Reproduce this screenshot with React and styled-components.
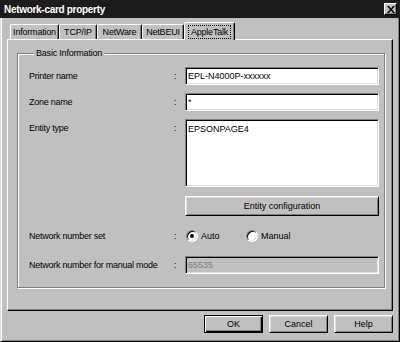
import React from "react";
import styled, { createGlobalStyle } from "styled-components";

const Global = createGlobalStyle`
  html, body {
    margin: 0;
    padding: 0;
    background: #c0c0c0;
  }
  body {
    font-family: "Liberation Sans", Arial, sans-serif;
    font-size: 9px;
    color: #000;
  }
`;

const tabs = [
  { label: "Information", w: 49 },
  { label: "TCP/IP", w: 38 },
  { label: "NetWare", w: 45 },
  { label: "NetBEUI", w: 42 },
  { label: "AppleTalk", w: 51, active: true },
];

const App = () => {
  return (
    <Window>
      <Global />
      <TitleBar>
        <Title>Network-card property</Title>
        <CloseButton>
          <svg width="8" height="7" viewBox="0 0 8 7">
            <path d="M0 0h2l2 2.5L6 0h2L5 3.5 8 7H6L4 4.5 2 7H0l3-3.5z" fill="#000" />
          </svg>
        </CloseButton>
      </TitleBar>
      <Frame>
        <TabStrip>
          {tabs.map((t) => (
            <Tab key={t.label} $w={t.w} $active={t.active}>
              {t.active ? <Focus>{t.label}</Focus> : t.label}
            </Tab>
          ))}
        </TabStrip>
        <Panel>
          <Group>
            <Legend>Basic Information</Legend>
            <Row>
              <Label>Printer name</Label>
              <Colon>:</Colon>
              <Field>EPL-N4000P-xxxxxx</Field>
            </Row>
            <Row $mt={8}>
              <Label>Zone name</Label>
              <Colon>:</Colon>
              <Field>*</Field>
            </Row>
            <Row $mt={8}>
              <Label>Entity type</Label>
              <Colon>:</Colon>
              <ListBox>EPSONPAGE4</ListBox>
            </Row>
            <Row $mt={9}>
              <span />
              <span />
              <Button $h={20}>Entity configuration</Button>
            </Row>
            <Row $mt={12}>
              <Label $lh={16}>Network number set</Label>
              <Colon $lh={16}>:</Colon>
              <RadioGroup>
                <RadioItem $w={60}>
                  <RadioDot $checked />
                  Auto
                </RadioItem>
                <RadioItem>
                  <RadioDot />
                  Manual
                </RadioItem>
              </RadioGroup>
            </Row>
            <Row $mt={12}>
              <Label>Network number for manual mode</Label>
              <Colon>:</Colon>
              <Field $disabled>65535</Field>
            </Row>
          </Group>
        </Panel>
        <Footer>
          <Button $h={18} $w={59} $default>OK</Button>
          <Button $h={18} $w={59}>Cancel</Button>
          <Button $h={18} $w={59}>Help</Button>
        </Footer>
      </Frame>
    </Window>
  );
};

export default App;

const Window = styled.div`
  width: 400px;
  height: 342px;
  display: flex;
  flex-direction: column;
  overflow: hidden;
  background: #c0c0c0;
`;

const TitleBar = styled.div`
  height: 18px;
  flex-shrink: 0;
  box-sizing: border-box;
  background: #1c1c1c;
  display: flex;
  align-items: center;
  justify-content: space-between;
  padding: 0 3px 0 4px;
`;

const Title = styled.div`
  color: #fff;
  font-weight: bold;
  font-size: 10px;
  letter-spacing: -0.3px;
`;

const CloseButton = styled.div`
  width: 13px;
  height: 12px;
  box-sizing: border-box;
  background: #c0c0c0;
  border: 1px solid;
  border-color: #fff #000 #000 #fff;
  box-shadow: inset -1px -1px 0 #808080;
  display: flex;
  align-items: center;
  justify-content: center;
`;

const Frame = styled.div`
  flex: 1;
  display: flex;
  flex-direction: column;
  box-sizing: border-box;
  border-left: 1px solid #dfdfdf;
  border-right: 1px solid #000;
  border-bottom: 1px solid #000;
  box-shadow: inset 1px 0 0 #fff, inset -1px -1px 0 #808080;
  padding: 4px 6px 8px 6px;
`;

const TabStrip = styled.div`
  height: 17px;
  flex-shrink: 0;
  display: flex;
  align-items: flex-end;
  padding-left: 3px;
`;

const Tab = styled.div`
  width: ${(p) => p.$w}px;
  height: ${(p) => (p.$active ? 18 : 15)}px;
  margin-bottom: ${(p) => (p.$active ? -1 : 0)}px;
  position: relative;
  z-index: ${(p) => (p.$active ? 1 : 0)};
  box-sizing: border-box;
  background: #c0c0c0;
  border: 1px solid;
  border-bottom: none;
  border-color: #fff #000 transparent #fff;
  border-radius: 2px 2px 0 0;
  box-shadow: inset -1px 0 0 #808080;
  display: flex;
  align-items: center;
  justify-content: center;
  font-size: 9px;
  letter-spacing: -0.2px;
  white-space: nowrap;
`;

const Focus = styled.span`
  outline: 1px dotted #000;
  padding: 1px 2px;
  margin-top: 1px;
`;

const Panel = styled.div`
  height: 272px;
  flex-shrink: 0;
  box-sizing: border-box;
  border: 1px solid;
  border-color: #fff #000 #000 #fff;
  box-shadow: inset -1px -1px 0 #808080;
  padding: 7px 7px 0 9px;
`;

const Group = styled.fieldset`
  margin: 0;
  min-width: 0;
  padding: 8px 5px 13px 11px;
  border: 1px solid #808080;
  box-shadow: 1px 1px 0 #fff, inset 1px 1px 0 #fff;
`;

const Legend = styled.legend`
  padding: 0 2px;
  margin-left: 5px;
  line-height: 12px;
  background: #c0c0c0;
  font-size: 9px;
  letter-spacing: -0.2px;
`;

const Row = styled.div`
  display: grid;
  grid-template-columns: 145px 11px 1fr;
  align-items: start;
  margin-top: ${(p) => p.$mt || 0}px;
`;

const Label = styled.div`
  line-height: ${(p) => p.$lh || 18}px;
  white-space: nowrap;
  letter-spacing: -0.25px;
`;

const Colon = styled.div`
  line-height: ${(p) => p.$lh || 18}px;
`;

const Field = styled.div`
  height: 18px;
  box-sizing: border-box;
  background: ${(p) => (p.$disabled ? "#c0c0c0" : "#fff")};
  color: ${(p) => (p.$disabled ? "#808080" : "#000")};
  border: 1px solid;
  border-color: #808080 #fff #fff #808080;
  box-shadow: inset 1px 1px 0 #000, inset -1px -1px 0 #dfdfdf;
  padding: 0 2px;
  line-height: 16px;
  white-space: nowrap;
`;

const ListBox = styled(Field)`
  height: 68px;
  line-height: 14px;
  padding: 2px 2px;
`;

const Button = styled.button`
  height: ${(p) => p.$h}px;
  width: ${(p) => (p.$w ? `${p.$w}px` : "100%")};
  box-sizing: border-box;
  margin: 0;
  padding: 0;
  font-family: inherit;
  font-size: 9px;
  color: #000;
  background: #c0c0c0;
  border: 1px solid;
  border-color: ${(p) => (p.$default ? "#000" : "#fff #000 #000 #fff")};
  box-shadow: ${(p) =>
    p.$default
      ? "inset 1px 1px 0 #fff, inset -1px -1px 0 #000, inset -2px -2px 0 #808080"
      : "inset 1px 1px 0 #dfdfdf, inset -1px -1px 0 #808080"};
`;

const RadioGroup = styled.div`
  display: flex;
  align-items: center;
  height: 16px;
  padding-left: 1px;
`;

const RadioItem = styled.div`
  display: flex;
  align-items: center;
  gap: 3px;
  width: ${(p) => (p.$w ? `${p.$w}px` : "auto")};
`;

const RadioDot = styled.span`
  width: 12px;
  height: 12px;
  box-sizing: border-box;
  border-radius: 50%;
  border: 1px solid;
  border-color: #808080 #fff #fff #808080;
  box-shadow: inset 1px 1px 0 #000, inset -1px -1px 0 #dfdfdf;
  background: #fff;
  position: relative;

  &::after {
    content: "";
    display: ${(p) => (p.$checked ? "block" : "none")};
    position: absolute;
    left: 3px;
    top: 3px;
    width: 4px;
    height: 4px;
    border-radius: 50%;
    background: #000;
  }
`;

const Footer = styled.div`
  display: flex;
  justify-content: flex-end;
  gap: 6px;
  margin-top: 4px;
`;
